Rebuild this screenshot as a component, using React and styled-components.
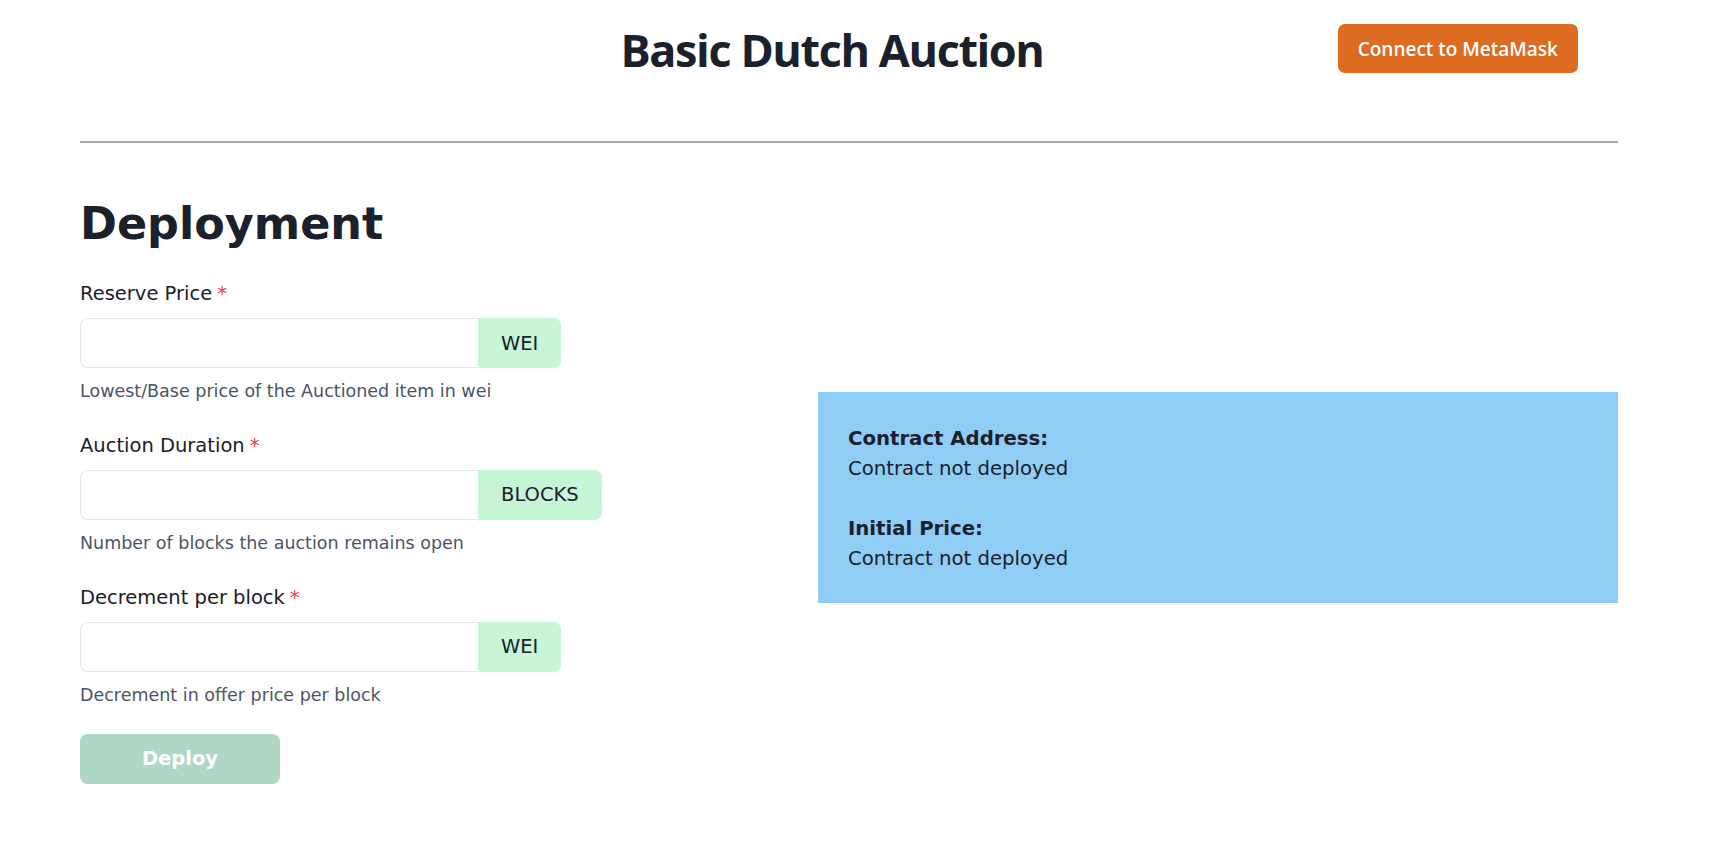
import React from 'react'
import styled, { createGlobalStyle } from 'styled-components'

const Global = createGlobalStyle`
  body {
    margin: 0;
    background: #fff;
    color: #1a202c;
    font-family: "DejaVu Sans", Verdana, sans-serif;
  }
`

const Page = styled.div`
  padding: 0 117px 40px 80px;
`

const Header = styled.header`
  display: grid;
  grid-template-columns: 1fr auto 1fr;
  align-items: start;
  padding: 24px 40px 0 6px;
`

const Title = styled.h1`
  grid-column: 2;
  margin: 0;
  font-family: "Open Sans", "Noto Sans", sans-serif;
  font-weight: 700;
  font-size: 45px;
  line-height: 52px;
  letter-spacing: -1.4px;
  color: #1a202c;
`

const ConnectButton = styled.button`
  grid-column: 3;
  justify-self: end;
  height: 49px;
  padding: 0 20px;
  border: none;
  border-radius: 7px;
  background: #dd6b20;
  color: #fff;
  font-family: "Open Sans", "Noto Sans", sans-serif;
  font-weight: 600;
  font-size: 19px;
  cursor: pointer;
`

const Divider = styled.hr`
  margin: 65px 0 0;
  height: 2px;
  border: none;
  background: #a9a9a9;
`

const Main = styled.main`
  display: grid;
  grid-template-columns: 1fr 800px;
  align-items: center;
  margin-top: 54px;
`

const Form = styled.section`
  display: flex;
  flex-direction: column;
`

const Heading = styled.h2`
  margin: 0 0 29px;
  font-size: 44.5px;
  font-weight: 700;
  line-height: 53px;
`

const Field = styled.div`
  margin-bottom: ${p => (p.$last ? '26px' : '26.5px')};
`

const Label = styled.label`
  display: block;
  margin-bottom: 9px;
  font-size: 19.5px;
  line-height: 30px;
`

const Required = styled.span`
  margin-left: 5px;
  color: #e53e3e;
`

const InputGroup = styled.div`
  display: flex;
  height: 50px;
`

const Input = styled.input`
  width: 398px;
  box-sizing: border-box;
  height: 100%;
  padding: 0 20px;
  border: 1px solid #e2e8f0;
  border-right: none;
  border-radius: 7.5px 0 0 7.5px;
  font: inherit;
  font-size: 19.5px;
  outline: none;
`

const Addon = styled.div`
  display: flex;
  align-items: center;
  padding: 0 23px;
  background: #c6f6d5;
  border-radius: 0 7.5px 7.5px 0;
  font-size: 19.5px;
  color: #1a202c;
`

const Helper = styled.div`
  margin-top: 10px;
  font-size: 17.5px;
  line-height: 26.25px;
  color: #4a5568;
`

const DeployButton = styled.button`
  width: 200px;
  height: 50px;
  border: none;
  border-radius: 7.5px;
  background: #aed8c3;
  color: #fff;
  font-family: "DejaVu Sans", Verdana, sans-serif;
  font-weight: 700;
  font-size: 19.5px;
  cursor: not-allowed;
`

const InfoPanel = styled.aside`
  margin-top: 14px;
  padding: 32px 30px 29px;
  background: #90cdf4;
  font-size: 19.7px;
  line-height: 30px;
`

const InfoBlock = styled.div`
  & + & {
    margin-top: 30px;
  }
`

const InfoLabel = styled.div`
  font-weight: 700;
`

const fields = [
  { label: 'Reserve Price', unit: 'WEI', help: 'Lowest/Base price of the Auctioned item in wei' },
  { label: 'Auction Duration', unit: 'BLOCKS', help: 'Number of blocks the auction remains open' },
  { label: 'Decrement per block', unit: 'WEI', help: 'Decrement in offer price per block' },
]

const info = [
  { label: 'Contract Address:', value: 'Contract not deployed' },
  { label: 'Initial Price:', value: 'Contract not deployed' },
]

export default function App() {
  return (
    <Page>
      <Global />
      <Header>
        <Title>Basic Dutch Auction</Title>
        <ConnectButton>Connect to MetaMask</ConnectButton>
      </Header>
      <Divider />
      <Main>
        <Form>
          <Heading>Deployment</Heading>
          {fields.map((f, i) => (
            <Field key={f.label} $last={i === fields.length - 1}>
              <Label>
                {f.label}
                <Required>*</Required>
              </Label>
              <InputGroup>
                <Input type="text" />
                <Addon>{f.unit}</Addon>
              </InputGroup>
              <Helper>{f.help}</Helper>
            </Field>
          ))}
          <div>
            <DeployButton disabled>Deploy</DeployButton>
          </div>
        </Form>
        <InfoPanel>
          {info.map(row => (
            <InfoBlock key={row.label}>
              <InfoLabel>{row.label}</InfoLabel>
              <div>{row.value}</div>
            </InfoBlock>
          ))}
        </InfoPanel>
      </Main>
    </Page>
  )
}
